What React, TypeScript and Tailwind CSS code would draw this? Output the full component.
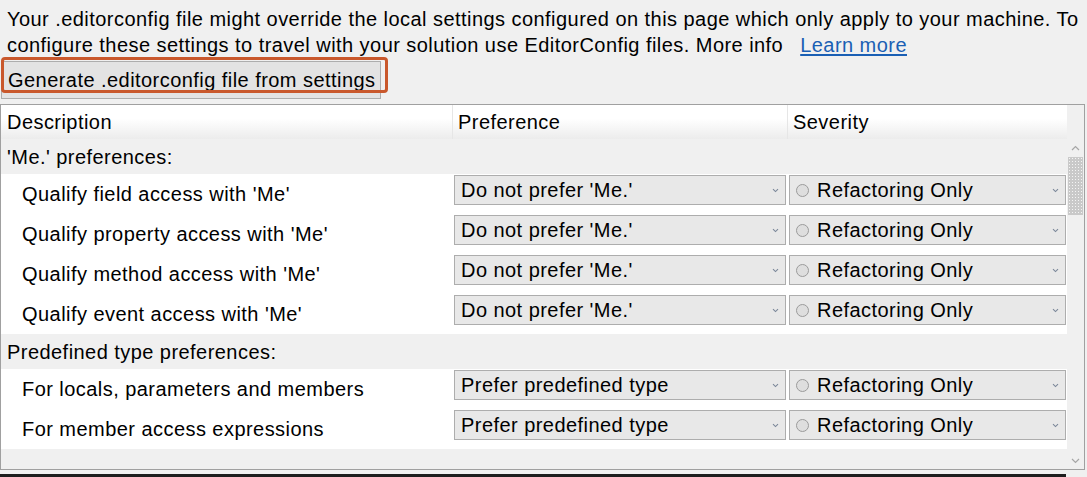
import React from 'react'

type Row = { label: string; pref: string }
type Section = { title: string; rows: Row[] }

const sections: Section[] = [
    {
        title: "'Me.' preferences:",
        rows: [
            { label: "Qualify field access with 'Me'", pref: "Do not prefer 'Me.'" },
            { label: "Qualify property access with 'Me'", pref: "Do not prefer 'Me.'" },
            { label: "Qualify method access with 'Me'", pref: "Do not prefer 'Me.'" },
            { label: "Qualify event access with 'Me'", pref: "Do not prefer 'Me.'" },
        ],
    },
    {
        title: 'Predefined type preferences:',
        rows: [
            { label: 'For locals, parameters and members', pref: 'Prefer predefined type' },
            { label: 'For member access expressions', pref: 'Prefer predefined type' },
        ],
    },
]

function Chevron() {
    return (
        <svg width="7" height="5" viewBox="0 0 7 5" className="absolute right-[6px] top-[12px]">
            <path d="M1 1.2 L3.5 3.6 L6 1.2" fill="none" stroke="#7b8799" strokeWidth="1.1" />
        </svg>
    )
}

function Combo({ children, width }: { children: React.ReactNode; width: string }) {
    return (
        <div
            className={`${width} relative mt-[1px] flex h-[30px] items-center border border-[#adadad] bg-[#e8e8e8] bg-[radial-gradient(#f2f2f2_0.6px,transparent_0.7px)] bg-[length:2px_2px] pl-[6px] leading-none`}
        >
            {children}
            <Chevron />
        </div>
    )
}

function SeverityIcon() {
    return (
        <span className="mr-[8px] inline-block h-[13px] w-[13px] shrink-0 rounded-full border border-[#9b9b9b] bg-[#dedede] bg-[radial-gradient(#f5f5f5_0.6px,transparent_0.7px)] bg-[length:2px_2px]" />
    )
}

export default function App() {
    return (
        <div className="relative h-[477px] w-[1087px] overflow-hidden bg-[#f0f0f0] font-['Liberation_Sans',Arial,sans-serif] text-[20px] tracking-[0.45px] text-black">
            <p className="pl-[7px] pt-[6px] leading-[26px] whitespace-nowrap">
                Your .editorconfig file might override the local settings configured on this page which only apply to your machine. To
                <br />
                configure these settings to travel with your solution use EditorConfig files. More info
                <a className="ml-[17px] text-[#1a5fb4] underline underline-offset-2">Learn more</a>
            </p>

            {/* generate button with orange highlight */}
            <div className="relative ml-[1px] mt-[3px] h-[38px] w-[380px]">
                <button className="flex h-full w-full items-center border border-[#adadad] bg-[#e3e3e3] pl-[6px] text-left leading-none whitespace-nowrap">
                    Generate .editorconfig file from settings
                </button>
                <div className="absolute left-0 top-[-4px] h-[36px] w-[387px] rounded-[4px] border-[3px] border-[#c9582c]" />
            </div>

            {/* options grid */}
            <div className="mt-[5px] flex h-[366px] w-[1085px] border border-[#a0a0a0]">
                <div className="flex w-[1066px] flex-col">
                    <div className="flex h-[34px] shrink-0 bg-gradient-to-b from-white from-40% to-[#ececec]">
                        <div className="flex w-[452px] items-center border-r border-[#e6e6e6] pl-[6px]">Description</div>
                        <div className="flex w-[335px] items-center border-r border-[#e6e6e6] pl-[5px]">Preference</div>
                        <div className="flex flex-1 items-center pl-[5px]">Severity</div>
                    </div>

                    {sections.map((section) => (
                        <div key={section.title}>
                            <div className="flex h-[35px] items-center pl-[6px]">{section.title}</div>
                            <div className="bg-white">
                                {section.rows.map((row) => (
                                    <div key={row.label} className="flex h-[40px]">
                                        <div className="flex w-[453px] items-center pl-[21px] whitespace-nowrap">{row.label}</div>
                                        <Combo width="w-[332px]">{row.pref}</Combo>
                                        <div className="w-[3px]" />
                                        <Combo width="w-[277px]">
                                            <SeverityIcon />
                                            Refactoring Only
                                        </Combo>
                                    </div>
                                ))}
                            </div>
                        </div>
                    ))}
                </div>

                {/* scrollbar */}
                <div className="flex w-[17px] flex-col">
                    <div className="h-[34px]" />
                    <div className="flex h-[18px] items-center justify-center">
                        <svg width="9" height="6" viewBox="0 0 9 6">
                            <path d="M1 5 L4.5 1.5 L8 5" fill="none" stroke="#a6a6a6" strokeWidth="1.2" />
                        </svg>
                    </div>
                    <div className="mx-[1px] h-[58px] bg-[#c9c9c9] bg-[radial-gradient(#f4f4f4_0.7px,transparent_0.8px)] bg-[length:3px_3px]" />
                    <div className="flex-1" />
                    <div className="flex h-[17px] items-center justify-center">
                        <svg width="9" height="6" viewBox="0 0 9 6">
                            <path d="M1 1 L4.5 4.5 L8 1" fill="none" stroke="#a6a6a6" strokeWidth="1.2" />
                        </svg>
                    </div>
                </div>
            </div>

            <div className="absolute bottom-0 left-0 h-[3px] w-[1066px] bg-[#1d1d1d]" />
        </div>
    )
}
